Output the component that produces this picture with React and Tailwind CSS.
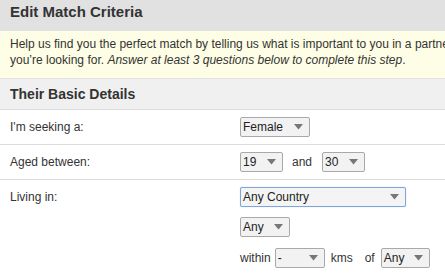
import React from "react";

function Arrow() {
  return (
    <svg width="9" height="6" viewBox="0 0 9 6" className="shrink-0">
      <path d="M0 0 L9 0 L4.5 5.5 Z" fill="#777" />
    </svg>
  );
}

function Select({ value, w, focus }) {
  return (
    <div
      className={
        "flex h-[20px] items-center justify-between rounded-[2px] border pl-[2px] pr-[6px] text-[12px] text-[#222] " +
        (focus
          ? "border-[#7ea6dc] bg-[#f4f4f4] shadow-[0_0_1px_#9cc0ee]"
          : "border-[#a9a9a9] bg-[#f2f2f2]")
      }
      style={{ width: w }}
    >
      <span>{value}</span>
      <Arrow />
    </div>
  );
}

export default function App() {
  return (
    <div className="h-[274px] w-[445px] overflow-hidden bg-white font-['Liberation_Sans',Arial,sans-serif] text-[#333]">
      <div className="w-[660px]">
        <div className="flex h-[31px] items-center bg-[#e1e1e1] px-[10px] pb-[6px] text-[15px] font-bold text-[#333]">
          Edit Match Criteria
        </div>
        <div className="border-b border-[#e2e2e2] bg-[#fefee6] px-[10px] pt-[5px] pb-[10px] text-[12px] leading-[16px] text-[#333]">
          Help us find you the perfect match by telling us what is important to you in a partner and what
          <br />
          you’re looking for. <i>Answer at least 3 questions below to complete this step</i>.
        </div>
        <div className="flex h-[31px] items-center border-b border-[#dcdcdc] bg-[#f0f0f0] px-[10px] text-[14px] font-bold text-[#333]">
          Their Basic Details
        </div>
        <div className="flex border-b border-[#dcdcdc] py-[7px] text-[12px]">
          <div className="flex w-[240px] items-center pl-[10px]">I'm seeking a:</div>
          <Select value="Female" w={70} />
        </div>
        <div className="flex border-b border-[#dcdcdc] py-[7px] text-[12px]">
          <div className="flex w-[240px] items-center pl-[10px]">Aged between:</div>
          <div className="flex items-center">
            <Select value="19" w={43} />
            <span className="ml-[9px] mr-[10px]">and</span>
            <Select value="30" w={43} />
          </div>
        </div>
        <div className="flex pt-[7px] text-[12px]">
          <div className="w-[240px] pl-[10px] leading-[20px]">Living in:</div>
          <div className="flex flex-col gap-[10px]">
            <Select value="Any Country" w={166} focus />
            <Select value="Any" w={50} />
            <div className="mt-[1px] flex items-center">
              <span className="mr-[4px]">within</span>
              <Select value="-" w={50} />
              <span className="ml-[6px]">kms</span>
              <span className="ml-[12px] mr-[6px]">of</span>
              <Select value="Any" w={49} />
            </div>
          </div>
        </div>
      </div>
    </div>
  );
}
